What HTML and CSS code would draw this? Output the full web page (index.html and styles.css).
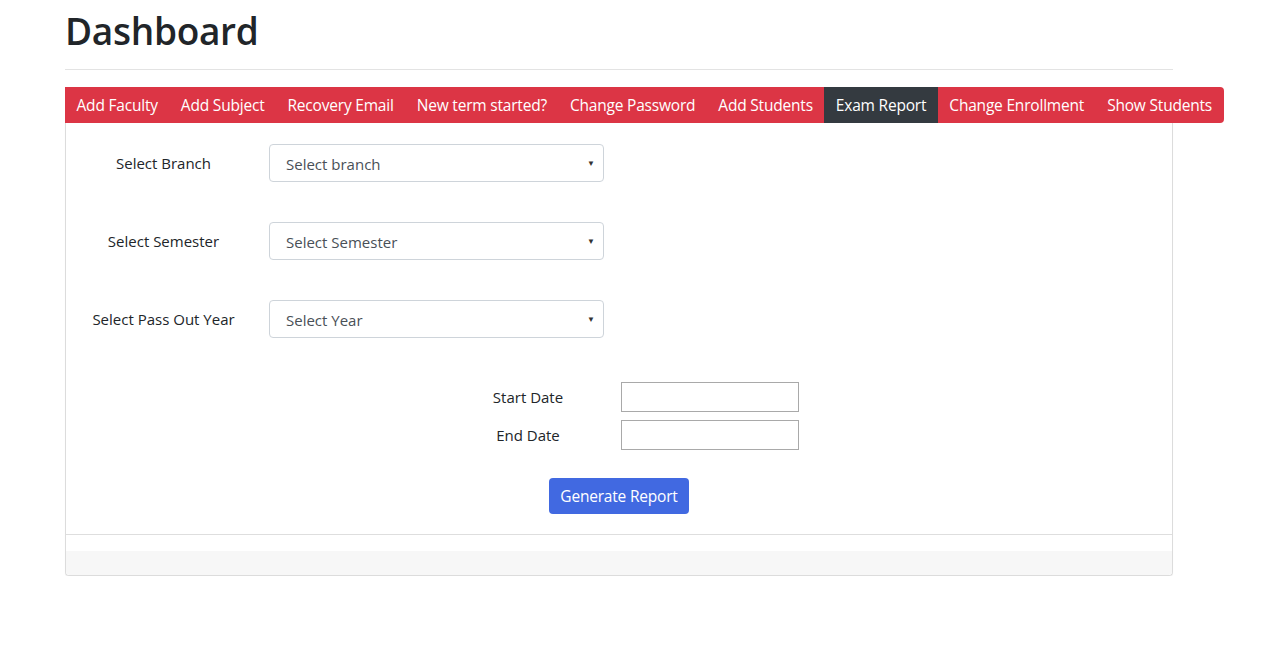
FILE: index.html
```html
<!DOCTYPE html>
<html>
<head>
<meta charset="utf-8">
<link rel="stylesheet" href="styles.css">
</head>
<body>
<div class="container">
  <h1 class="title">Dashboard</h1>
  <hr class="rule">
  <nav class="tabs">
    <a class="tab">Add Faculty</a>
    <a class="tab">Add Subject</a>
    <a class="tab">Recovery Email</a>
    <a class="tab">New term started?</a>
    <a class="tab">Change Password</a>
    <a class="tab">Add Students</a>
    <a class="tab active">Exam Report</a>
    <a class="tab">Change Enrollment</a>
    <a class="tab">Show Students</a>
  </nav>
  <div class="panel">
    <div class="content">
      <div class="row">
        <label class="row-label">Select Branch</label>
        <div class="select"><span>Select branch</span><span class="caret">▼</span></div>
      </div>
      <div class="row">
        <label class="row-label">Select Semester</label>
        <div class="select"><span>Select Semester</span><span class="caret">▼</span></div>
      </div>
      <div class="row">
        <label class="row-label">Select Pass Out Year</label>
        <div class="select"><span>Select Year</span><span class="caret">▼</span></div>
      </div>
      <div class="dates">
        <div class="date-row">
          <label class="date-label">Start Date</label>
          <input class="date-input" type="text">
        </div>
        <div class="date-row">
          <label class="date-label">End Date</label>
          <input class="date-input" type="text">
        </div>
        <button class="btn">Generate Report</button>
      </div>
    </div>
    <div class="spacer"></div>
    <div class="footer"></div>
  </div>
</div>
</body>
</html>
```

FILE: styles.css
```css
* { box-sizing: border-box; }
body {
  margin: 0;
  font-family: "Open Sans", "Noto Sans", sans-serif;
  color: #212529;
  background: #fff;
}
.container {
  width: 1108px;
  margin-left: 65px;
}
.title {
  margin: 0;
  padding-top: 6px;
  font-size: 37px;
  font-weight: 600;
  line-height: 50px;
  color: #212529;
  letter-spacing: -0.3px;
}
.rule {
  margin: 13px 0 17px 0;
  border: 0;
  border-top: 1px solid #e3e3e3;
}
.tabs {
  display: flex;
  width: 1159px;
  height: 36px;
  background: #dc3545;
  border-radius: 0 4px 4px 0;
}
.tab {
  display: flex;
  align-items: center;
  padding: 0 11.5px;
  color: #fff;
  font-size: 15.5px;
  white-space: nowrap;
  letter-spacing: -0.2px;
}
.tab.active {
  background: #343a40;
}
.panel {
  border: 1px solid #dcdcdc;
  border-top: 0;
  border-radius: 0 0 4px 4px;
  box-shadow: 0 1px 1px rgba(0,0,0,0.06);
}
.content {
  border-bottom: 1px solid #dedede;
  padding: 21px 0 20px 0;
}
.row {
  display: flex;
  align-items: center;
  height: 38px;
  margin-bottom: 40px;
}
.row-label {
  width: 195px;
  text-align: center;
  font-size: 15px;
  margin-right: 8px;
}
.select {
  width: 335px;
  height: 38px;
  border: 1px solid #ced4da;
  border-radius: 4px;
  display: flex;
  align-items: center;
  justify-content: space-between;
  padding: 2px 8px 0 16px;
  font-size: 15px;
  color: #495057;
}
.caret {
  font-size: 8px;
  color: #333;
  margin-top: -4px;
}
.dates {
  display: flex;
  flex-direction: column;
  align-items: center;
  padding-top: 4px;
}
.date-row {
  display: flex;
  align-items: center;
  margin-left: 24px;
  margin-bottom: 8px;
}
.date-label {
  width: 130px;
  text-align: center;
  font-size: 15px;
  margin-right: 28px;
}
.date-input {
  width: 178px;
  height: 30px;
  border: 1px solid #a9a9a9;
  margin: 0;
  padding: 0;
}
.btn {
  margin-top: 20px;
  width: 140px;
  height: 36px;
  background: #4169e1;
  color: #fff;
  border: 0;
  border-radius: 4px;
  font-family: "Open Sans", "Noto Sans", sans-serif;
  font-size: 15.5px;
  letter-spacing: -0.2px;
}
.spacer {
  height: 16px;
}
.footer {
  height: 24px;
  background: #f7f7f7;
  border-radius: 0 0 4px 4px;
}
```
